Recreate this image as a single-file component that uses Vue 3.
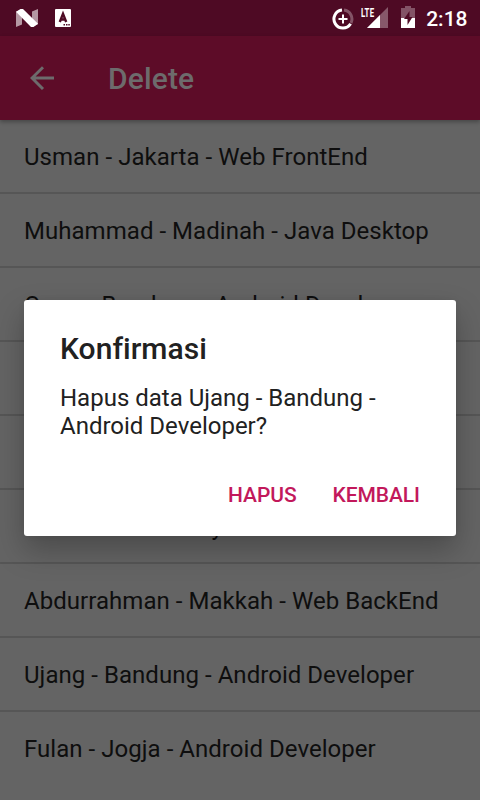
<script setup>
const rows = [
  'Usman - Jakarta - Web FrontEnd',
  'Muhammad - Madinah - Java Desktop',
  'Omar - Bandung - Android Developer',
  '',
  '',
  'Sulaman - Surabaya - Web',
  'Abdurrahman - Makkah - Web BackEnd',
  'Ujang - Bandung - Android Developer',
  'Fulan - Jogja - Android Developer',
]
</script>

<template>
  <div class="screen">
    <header class="status">
      <div class="left">
        <svg width="22" height="18" viewBox="0 0 22 18">
          <path d="M0 2.800 6 0.200V15.500L0 18ZM16 2.500 22 0v15.200l-6 2.800Z" fill="#fff" fill-opacity=".58" />
          <path d="M0 2.800 4.500 0H7L22 14.800 17.500 18H15Z" fill="#fff" />
        </svg>
        <svg width="16" height="18" viewBox="0 0 16 18">
          <rect width="16" height="18" rx="1" fill="#fff" />
          <path d="M4.800 13 8 4.800l3.200 8.200M6 10.500h4" fill="none" stroke="#4e0a24" stroke-width="2.400" />
          <path d="M8.500 15h1.500v1.500H8.500zM11 15h1.500v1.500H11zM13.300 15h1.500v1.500h-1.500z" fill="#4e0a24" />
        </svg>
      </div>
      <div class="right">
        <svg class="saver" width="22" height="22" viewBox="0 0 22 22">
          <path d="M12 2.100A9 9 0 0 1 19 15" fill="none" stroke="#fff" stroke-opacity=".3" stroke-width="3" />
          <path d="M10 2.100A9 9 0 1 0 18.600 15.800" fill="none" stroke="#fff" stroke-width="3" />
          <path d="M11 6.500v9M6.500 11h9" stroke="#fff" stroke-width="2" />
        </svg>
        <div class="signal">
          <svg width="22" height="21" viewBox="0 0 22 21">
            <path d="M22 0v21H1Z" fill="#fff" fill-opacity=".32" />
            <path d="M14 8v13H1Z" fill="#fff" />
          </svg>
          <span class="lte">LTE</span>
        </div>
        <svg class="battery" width="14" height="22" viewBox="0 0 14 22">
          <path d="M0 2h4V0h6v2h4v10H0Z" fill="#fff" fill-opacity=".3" />
          <path d="M0 12h14v10H0Z" fill="#fff" />
          <path d="M8.500 5 3 13h3.500v6L11.500 11H8.500Z" fill="#4e0a24" />
        </svg>
        <span class="clock">2:18</span>
      </div>
    </header>
    <div class="toolbar">
      <svg width="24" height="24" viewBox="0 0 24 24">
        <path d="M13 1.200 2 12l11 11M2 12h22" fill="none" stroke="#6d6b6c" stroke-width="2.900" />
      </svg>
      <h1>Delete</h1>
    </div>
    <ul class="list">
      <li v-for="(row, i) in rows" :key="i">{{ row }}</li>
    </ul>
    <section class="dialog" role="dialog">
      <h2>Konfirmasi</h2>
      <p>Hapus data Ujang - Bandung -<br />Android Developer?</p>
      <div class="actions">
        <button>HAPUS</button>
        <button>KEMBALI</button>
      </div>
    </section>
  </div>
</template>

<style>
body { margin: 0; background: #646464; }
</style>

<style scoped>
.screen {
  position: relative;
  width: 480px;
  height: 800px;
  overflow: hidden;
  background: #646464;
  font-family: Roboto, sans-serif;
}
.status {
  height: 36px;
  background: #4e0a24;
  display: flex;
  justify-content: space-between;
  box-sizing: border-box;
  padding: 0 12.5px 0 16px;
}
.left { display: flex; gap: 17px; padding-top: 9px; }
.right { display: flex; align-items: flex-start; }
.saver { margin-top: 7.500px; }
.signal { position: relative; width: 22px; height: 21px; margin: 7px 13px 0 12px; }
.lte {
  position: absolute;
  left: -5px;
  top: -1px;
  font-size: 13px;
  line-height: 13px;
  font-weight: 700;
  letter-spacing: .4px;
  color: #fff;
  transform: scaleX(.6);
  transform-origin: left;
}
.battery { margin-top: 6px; margin-right: 11px; }
.clock { font-size: 21px; line-height: 38px; font-weight: 500; color: #fff; }
.toolbar {
  position: relative;
  height: 84px;
  background: #5d0c28;
  display: flex;
  align-items: center;
  gap: 54px;
  box-sizing: border-box;
  padding-left: 30px;
  box-shadow: 0 2px 4px rgba(0, 0, 0, .3);
}
.toolbar h1 {
  margin: 2px 0 0;
  font-size: 30px;
  line-height: 36px;
  font-weight: 500;
  letter-spacing: .15px;
  color: #6d6b6c;
}
.list { list-style: none; margin: 0; padding: 0; }
.list li {
  height: 72px;
  padding: 0 24px;
  border-bottom: 2px solid #565656;
  font-size: 24px;
  line-height: 75px;
  letter-spacing: .04px;
  color: #0e0e0e;
  white-space: nowrap;
}
.list li:last-child { border: 0; }
.dialog {
  position: absolute;
  left: 24px;
  top: 300px;
  width: 432px;
  height: 236px;
  box-sizing: border-box;
  padding: 31px 36px 0;
  border-radius: 3px;
  background: #fff;
  box-shadow: 0 14px 30px rgba(0, 0, 0, .26), 0 0 6px rgba(0, 0, 0, .06);
  color: #212121;
}
.dialog h2 { margin: 0; font-size: 30px; line-height: 36px; font-weight: 500; letter-spacing: .04px; }
.dialog p { margin: 17px 0 0; font-size: 24px; line-height: 28px; }
.actions { display: flex; justify-content: flex-end; gap: 36px; margin-top: 42px; }
.actions button {
  border: 0;
  padding: 0;
  background: none;
  font: 500 21px/26px Roboto, sans-serif;
  letter-spacing: -.08px;
  color: #c2185b;
}
</style>
